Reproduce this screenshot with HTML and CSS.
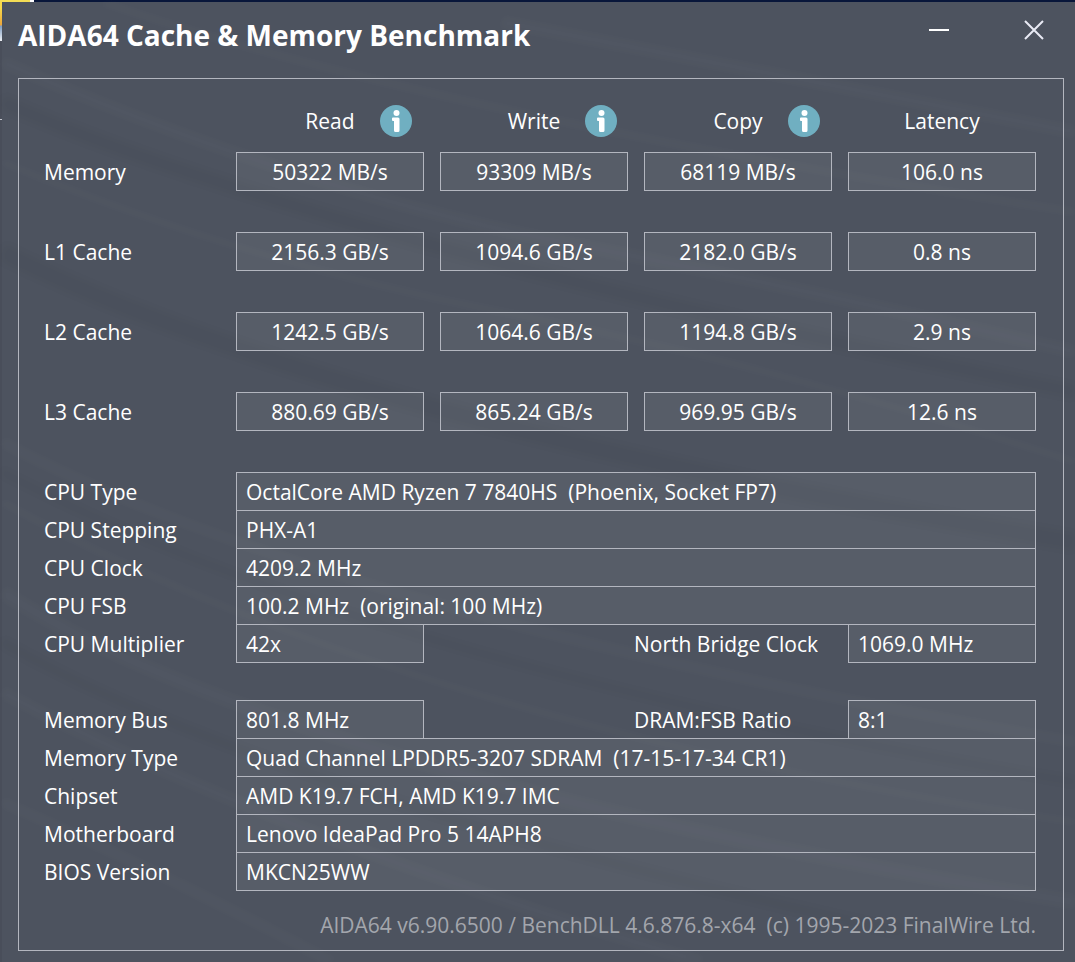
FILE: index.html
```html
<!DOCTYPE html>
<html lang="en">
<head>
	<meta charset="UTF-8">
	<meta name="viewport" content="width=device-width, initial-scale=1.0">
	<title>AIDA64 Cache &amp; Memory Benchmark</title>
	<link rel="stylesheet" href="styles.css">
</head>
<body>

	<svg class="symbols" width="0" height="0" aria-hidden="true">
		<symbol id="info" viewBox="0 0 32 32">
			<circle cx="16" cy="16" r="16" fill="#70afc1"/>
			<circle cx="16.500" cy="8" r="3" fill="#fff"/>
			<path d="M12 13.500Q12 12.500 13 12.500H18Q19.500 12.500 19.500 14V25.500Q19.500 27 18 27H15.500Q14 27 14 25.500V16H13Q12 16 12 15Z" fill="#fff"/>
		</symbol>
	</svg>

	<div class="window">
		<svg class="streaks" viewBox="0 0 1073 960" preserveAspectRatio="none" aria-hidden="true">
			<g class="light">
				<path d="M100 0Q420 110 1073 210" stroke-width="7"/>
				<path d="M0 60Q300 190 560 240T1073 350" stroke-width="12"/>
				<path d="M0 160Q240 260 500 310T1073 460" stroke-width="6"/>
				<path d="M500 20Q760 70 1073 130" stroke-width="12"/>
				<path d="M0 440Q320 610 1073 740" stroke-width="10"/>
				<path d="M0 500Q400 720 1073 820" stroke-width="6"/>
				<path d="M0 590Q280 770 1073 900" stroke-width="14"/>
				<path d="M0 690Q260 830 700 960" stroke-width="12"/>
				<path d="M0 800Q160 870 330 960" stroke-width="10"/>
			</g>
			<g class="dark">
				<path d="M0 100Q320 240 1073 390" stroke-width="14"/>
				<path d="M0 250Q340 420 1073 540" stroke-width="18"/>
				<path d="M0 470Q360 660 1073 780" stroke-width="6"/>
				<path d="M0 640Q260 790 900 930" stroke-width="8"/>
			</g>
		</svg>

		<header class="titlebar">
			<h1>AIDA64 Cache &amp; Memory Benchmark</h1>
			<div class="window-buttons">
				<button type="button" aria-label="Minimize"><svg width="20" height="20" viewBox="0 0 20 20"><path d="M0 10H20" stroke="#fff" stroke-width="2"/></svg></button>
				<button type="button" aria-label="Close"><svg width="20" height="20" viewBox="0 0 20 20"><path d="M1 1L19 19M19 1L1 19" stroke="#e9ebf5" stroke-width="2"/></svg></button>
			</div>
		</header>

		<main class="panel">
			<table class="bench">
				<thead>
					<tr>
						<td class="name"></td>
						<th scope="col"><div class="col-head"><span>Read</span><button type="button" aria-label="About read"><svg width="32" height="32"><use href="#info"/></svg></button></div></th>
						<th scope="col"><div class="col-head"><span>Write</span><button type="button" aria-label="About write"><svg width="32" height="32"><use href="#info"/></svg></button></div></th>
						<th scope="col"><div class="col-head"><span>Copy</span><button type="button" aria-label="About copy"><svg width="32" height="32"><use href="#info"/></svg></button></div></th>
						<th scope="col"><div class="col-head"><span>Latency</span></div></th>
					</tr>
				</thead>
				<tbody>
					<tr>
						<th class="name" scope="row">Memory</th>
						<td><div class="field">50322 MB/s</div></td>
						<td><div class="field">93309 MB/s</div></td>
						<td><div class="field">68119 MB/s</div></td>
						<td><div class="field">106.0 ns</div></td>
					</tr>
					<tr>
						<th class="name" scope="row">L1 Cache</th>
						<td><div class="field">2156.3 GB/s</div></td>
						<td><div class="field">1094.6 GB/s</div></td>
						<td><div class="field">2182.0 GB/s</div></td>
						<td><div class="field">0.8 ns</div></td>
					</tr>
					<tr>
						<th class="name" scope="row">L2 Cache</th>
						<td><div class="field">1242.5 GB/s</div></td>
						<td><div class="field">1064.6 GB/s</div></td>
						<td><div class="field">1194.8 GB/s</div></td>
						<td><div class="field">2.9 ns</div></td>
					</tr>
					<tr>
						<th class="name" scope="row">L3 Cache</th>
						<td><div class="field">880.69 GB/s</div></td>
						<td><div class="field">865.24 GB/s</div></td>
						<td><div class="field">969.95 GB/s</div></td>
						<td><div class="field">12.6 ns</div></td>
					</tr>
				</tbody>
			</table>

			<section class="details">
				<div class="row">
					<label for="cpu-type">CPU Type</label>
					<input class="field wide" id="cpu-type" readonly value="OctalCore AMD Ryzen 7 7840HS  (Phoenix, Socket FP7)">
				</div>
				<div class="row">
					<label for="cpu-stepping">CPU Stepping</label>
					<input class="field wide" id="cpu-stepping" readonly value="PHX-A1">
				</div>
				<div class="row">
					<label for="cpu-clock">CPU Clock</label>
					<input class="field wide" id="cpu-clock" readonly value="4209.2 MHz">
				</div>
				<div class="row">
					<label for="cpu-fsb">CPU FSB</label>
					<input class="field wide" id="cpu-fsb" readonly value="100.2 MHz  (original: 100 MHz)">
				</div>
				<div class="row">
					<label for="cpu-multi">CPU Multiplier</label>
					<input class="field" id="cpu-multi" readonly value="42x">
					<label class="second" for="nb-clock">North Bridge Clock</label>
					<input class="field" id="nb-clock" readonly value="1069.0 MHz">
				</div>
			</section>

			<section class="details">
				<div class="row">
					<label for="mem-bus">Memory Bus</label>
					<input class="field" id="mem-bus" readonly value="801.8 MHz">
					<label class="second" for="ratio">DRAM:FSB Ratio</label>
					<input class="field" id="ratio" readonly value="8:1">
				</div>
				<div class="row">
					<label for="mem-type">Memory Type</label>
					<input class="field wide" id="mem-type" readonly value="Quad Channel LPDDR5-3207 SDRAM  (17-15-17-34 CR1)">
				</div>
				<div class="row">
					<label for="chipset">Chipset</label>
					<input class="field wide" id="chipset" readonly value="AMD K19.7 FCH, AMD K19.7 IMC">
				</div>
				<div class="row">
					<label for="board">Motherboard</label>
					<input class="field wide" id="board" readonly value="Lenovo IdeaPad Pro 5 14APH8">
				</div>
				<div class="row">
					<label for="bios">BIOS Version</label>
					<input class="field wide" id="bios" readonly value="MKCN25WW">
				</div>
			</section>

			<footer class="version">AIDA64 v6.90.6500 / BenchDLL 4.6.876.8-x64&nbsp; (c) 1995-2023 FinalWire Ltd.</footer>
		</main>
	</div>

</body>
</html>
```
FILE: styles.css
```css
* {
    box-sizing: border-box;
}
/* the strip of desktop that shows around the window */
body {
    margin: 0;
    padding: 2px 0 0 2px;
    min-height: 100vh;
    display: flex;
    background:
        linear-gradient(90deg, #f3dc55 30px, #fff 30px) 0 0 / 34px 2px no-repeat,
        linear-gradient(#f7d94a 8px, #eda63a 25px, #7f9cc0 26px, #e8ecf2 40px) 0 0 / 2px 41px no-repeat,
        linear-gradient(#c5c8cf, #c5c8cf) 0 119px / 2px 1px no-repeat,
        linear-gradient(#08163a, #08163a) 0 0 / 100% 2px no-repeat,
        #494e5a;
    color: #fff;
    font-family: "Open Sans", "Segoe UI", sans-serif;
    font-size: 21px;
    line-height: 38px;
}
button {
    display: flex;
    margin: 0;
    padding: 0;
    border: 0;
    background: none;
    color: inherit;
}
.symbols {
    position: absolute;
}

/* window */
.window {
    position: relative;
    z-index: 0;
    flex: 1;
    display: flex;
    flex-direction: column;
    padding: 0 11px 11px 16px;
    background: #4d535f;
}
.streaks {
    position: absolute;
    inset: 0;
    z-index: -1;
    width: 100%;
    height: 100%;
    fill: none;
    filter: blur(3px);
}
.light {
    stroke: rgba(255,255,255,0.02);
}
.dark {
    stroke: rgba(0,0,0,0.03);
}
.titlebar {
    display: flex;
    justify-content: space-between;
    align-items: flex-start;
    height: 76px;
    padding-top: 14px;
}
h1 {
    margin: 0;
    font-size: 28px;
    font-weight: bold;
    line-height: 38px;
}
.window-buttons {
    display: flex;
    gap: 75px;
    padding: 4px 20px 0 0;
}
.panel {
    flex: 1;
    padding: 26px 27px 5px 25px;
    border: 1px solid #b3b6bf;
}

/* results table */
.bench {
    width: 100%;
    table-layout: fixed;
    border-collapse: collapse;
}
.bench th {
    font-weight: normal;
}
.bench th, .bench td {
    padding: 0 0 41px 16px;
    vertical-align: top;
}
.bench thead th {
    padding-bottom: 15px;
}
.bench thead td {
    padding-bottom: 0;
}
.bench .name {
    width: 176px;
    padding-left: 0;
    text-align: left;
}
.bench tbody .name, .row label {
    padding-top: 1px;
}
.col-head {
    display: grid;
    grid-template-columns: 1fr auto 1fr;
    align-items: center;
    column-gap: 25px;
    height: 32px;
    line-height: 32px;
}
.col-head span {
    grid-column: 2;
}
.field {
    width: 100%;
    min-width: 0;
    height: 39px;
    padding: 0 9px;
    border: 1px solid #b3b6bf;
    border-radius: 0;
    outline: 0;
    background: rgba(255,255,255,0.06);
    background-clip: padding-box;
    color: inherit;
    font: inherit;
}
.bench .field {
    text-align: center;
}

/* system details, the rows share their borders */
.details + .details {
    margin-top: 37px;
}
.row {
    display: grid;
    grid-template-columns: 176px repeat(4, 1fr);
    column-gap: 16px;
}
.row + .row {
    margin-top: -1px;
}
.wide {
    grid-column: 2 / -1;
}
.second {
    grid-column: 3 / 5;
    justify-self: end;
    width: 198px;
}
.version {
    padding-top: 15px;
    color: #a3a6ad;
    text-align: right;
}
```
